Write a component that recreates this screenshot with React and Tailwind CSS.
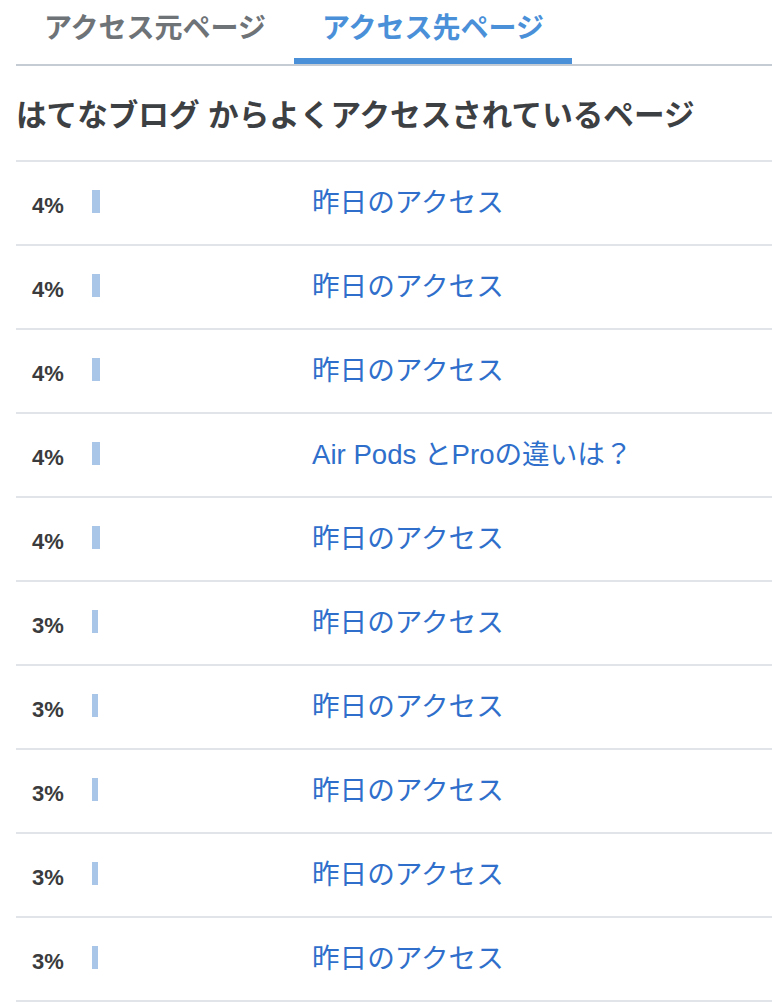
import React from 'react';

const rows = [
  { pct: 4, title: '昨日のアクセス' },
  { pct: 4, title: '昨日のアクセス' },
  { pct: 4, title: '昨日のアクセス' },
  { pct: 4, title: 'Air Pods とProの違いは？' },
  { pct: 4, title: '昨日のアクセス' },
  { pct: 3, title: '昨日のアクセス' },
  { pct: 3, title: '昨日のアクセス' },
  { pct: 3, title: '昨日のアクセス' },
  { pct: 3, title: '昨日のアクセス' },
  { pct: 3, title: '昨日のアクセス' },
];

const font = { fontFamily: '"Liberation Sans", "Noto Sans CJK JP", sans-serif' };

const App = () => {
  return (
    <div className="min-h-screen bg-white pl-4" style={font}>
      {/* Tabs */}
      <div className="flex border-b-2 border-[#c5ccd4]">
        <div className="w-[278px] h-[64px] flex items-center justify-center pb-[6px] text-[28px] leading-none font-bold text-[#6e7378]">
          アクセス元ページ
        </div>
        <div className="w-[278px] h-[64px] flex items-center justify-center text-[28px] leading-none font-bold text-[#4a90d9] border-b-[6px] border-[#4a90d9]">
          アクセス先ページ
        </div>
      </div>

      <h2 className="text-[30.6px] font-bold text-[#3d4043] pt-[29px] pb-[25px] leading-[40px] whitespace-nowrap">
        はてなブログ からよくアクセスされているページ
      </h2>

      {/* Ranking */}
      <div className="border-t-2 border-[#e1e5e9]">
        {rows.map((row, i) => (
          <div key={i} className="flex items-center h-[84px] border-b-2 border-[#e1e5e9]">
            <div className="w-[76px] pl-4 mt-[6px] text-[22px] leading-none font-bold text-[#3a3b3d]">{row.pct}%</div>
            <div className="w-[220px] flex items-center">
              <div className="h-[23px] bg-[#a9c6e8] -mt-[3px]" style={{ width: row.pct * 2 }}></div>
            </div>
            <a href="#" className="text-[27.6px] leading-none text-[#2f6fcb] no-underline">{row.title}</a>
          </div>
        ))}
      </div>
    </div>
  );
};

export default App;
